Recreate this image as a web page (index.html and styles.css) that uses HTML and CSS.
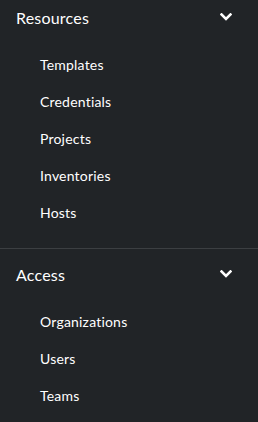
FILE: index.html
```html
<!DOCTYPE html>
<html>
<head>
<meta charset="utf-8">
<link rel="stylesheet" href="styles.css">
</head>
<body>
<nav class="nav">
  <section class="section">
    <div class="toggle">
      <span class="title">Resources</span>
      <svg class="chev" width="12" height="8" viewBox="0 0 12 8"><path d="M1.5 1.5 L6 6 L10.5 1.5" fill="none" stroke="#fff" stroke-width="2.6" stroke-linecap="square"/></svg>
    </div>
    <ul class="list">
      <li class="item">Templates</li>
      <li class="item">Credentials</li>
      <li class="item">Projects</li>
      <li class="item">Inventories</li>
      <li class="item">Hosts</li>
    </ul>
  </section>
  <section class="section divided">
    <div class="toggle">
      <span class="title">Access</span>
      <svg class="chev" width="12" height="8" viewBox="0 0 12 8"><path d="M1.5 1.5 L6 6 L10.5 1.5" fill="none" stroke="#fff" stroke-width="2.6" stroke-linecap="square"/></svg>
    </div>
    <ul class="list">
      <li class="item">Organizations</li>
      <li class="item">Users</li>
      <li class="item">Teams</li>
    </ul>
  </section>
</nav>
</body>
</html>
```
FILE: styles.css
```css
html, body {
  margin: 0;
  padding: 0;
  background: #212427;
  height: 100%;
  overflow: hidden;
}
.nav {
  font-family: "Lato", "Open Sans", sans-serif;
  color: #fff;
  display: flex;
  flex-direction: column;
}
.section {
  padding-bottom: 17px;
}
.divided {
  border-top: 1px solid #3c3f42;
  padding-top: 8px;
}
.toggle {
  display: flex;
  align-items: center;
  justify-content: space-between;
  height: 36px;
  padding: 0 26px 0 16px;
}
.title {
  font-size: 16px;
  line-height: 24px;
  letter-spacing: 0.2px;
}
.chev {
  display: block;
  margin-top: -2px;
}
.list {
  list-style: none;
  margin: 0;
  padding: 10px 0 0 0;
}
.item {
  font-size: 14px;
  line-height: 21px;
  letter-spacing: 0.2px;
  padding: 8px 16px 8px 40px;
}
```
